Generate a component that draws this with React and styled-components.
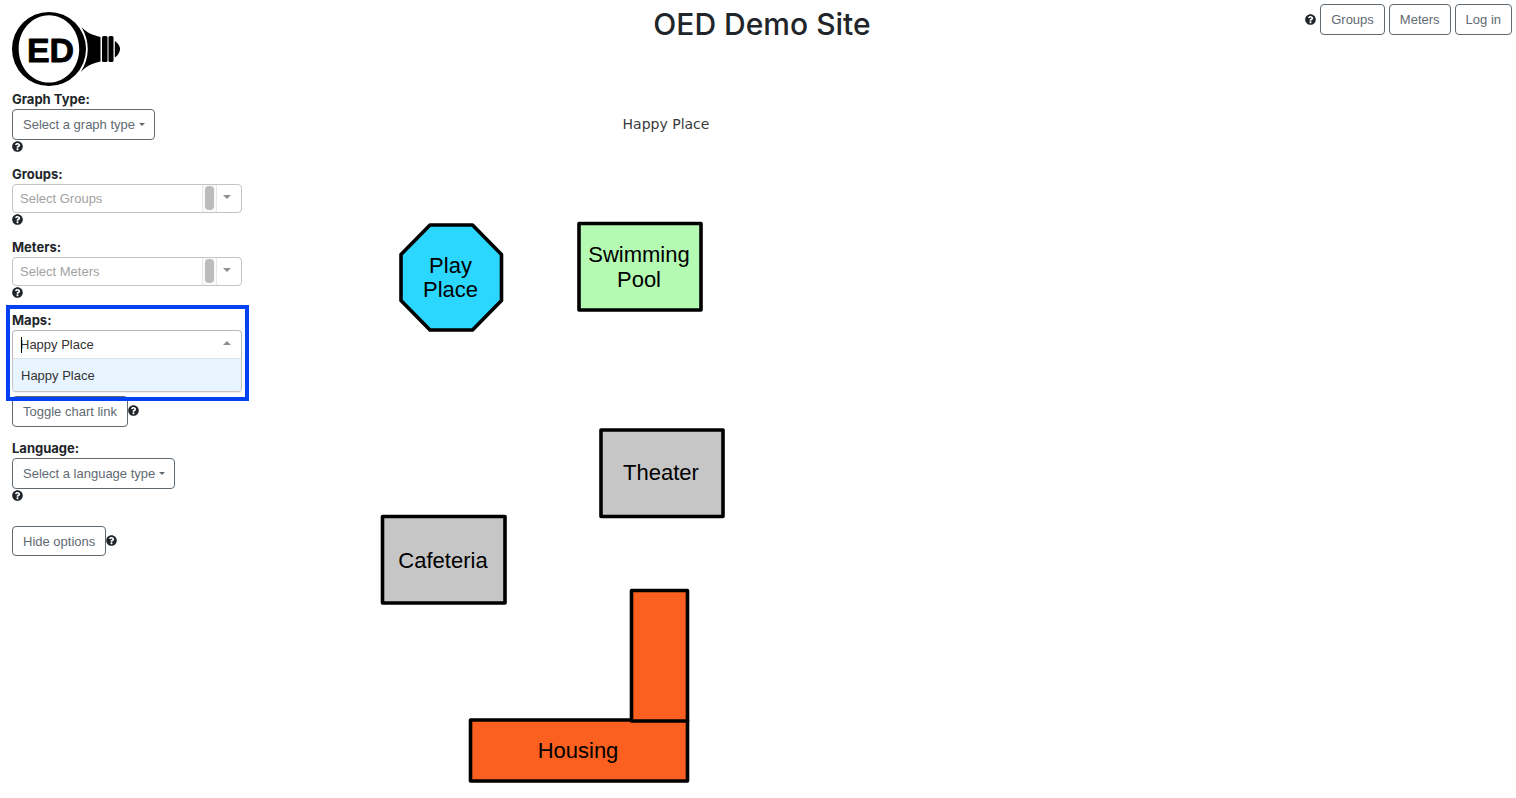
import React from "react";
import styled, { createGlobalStyle, css } from "styled-components";
import { FaQuestionCircle } from "react-icons/fa";

const GlobalStyle = createGlobalStyle`
  *, *::before, *::after { box-sizing: border-box; }
  body {
    margin: 0;
    background: #fff;
    color: #212529;
    font-family: "Liberation Sans", Arial, sans-serif;
    font-size: 13px;
    line-height: 19px;
  }
`;

const Header = styled.header`
  display: grid;
  grid-template-columns: 1fr auto 1fr;
  align-items: start;
  min-height: 90px;
  padding: 0 4px 0 12px;
`;

const HomeLink = styled.a`
  justify-self: start;
  padding-top: 12px;
  color: #000;
  svg { display: block; }
`;

const Title = styled.h1`
  margin: 0;
  padding-top: 4px;
  font-family: Inter, sans-serif;
  font-size: 30px;
  font-weight: 500;
  line-height: 40px;
`;

const Nav = styled.nav`
  display: flex;
  justify-self: end;
  align-items: center;
  gap: 4px;
  padding-top: 4px;
`;

const outline = css`
  height: ${(p) => p.$height || 31}px;
  border: 1px solid #5f6a73;
  border-radius: 4px;
  background: #fff;
  color: #5f6a73;
  font-family: inherit;
  font-size: 13px;
  line-height: 19px;
  white-space: nowrap;
`;

const OutlineButton = styled.button`
  ${outline}
  padding: 0 10px;
`;

const DropdownWrap = styled.span`
  position: relative;
  display: flex;
  width: fit-content;
`;

const Dropdown = styled.select`
  ${outline}
  appearance: none;
  padding: 0 18px 0 10px;
`;

const Caret = styled.span`
  width: 0;
  height: 0;
  border: ${(p) => p.$size || 4}px solid transparent;
  border-top-color: ${(p) => (p.$up ? "transparent" : "currentColor")};
  border-bottom-color: ${(p) => (p.$up ? "currentColor" : "transparent")};
  ${(p) => (p.$up ? "border-top-width: 0;" : "border-bottom-width: 0;")}
  pointer-events: none;
`;

const DropdownCaret = styled(Caret)`
  position: absolute;
  right: 10px;
  top: 14px;
  color: #5f6a73;
`;

const HelpButton = styled.button`
  display: flex;
  align-items: center;
  height: 13px;
  padding: 0;
  border: 0;
  background: none;
  color: #212529;
  font-size: 11px;
`;

const Page = styled.div`
  display: flex;
  align-items: flex-start;
`;

const Sidebar = styled.aside`
  display: flex;
  flex: none;
  flex-direction: column;
  gap: 12px;
  width: 252px;
  padding: 0 10px 0 12px;
`;

const Field = styled.div`
  position: relative;
`;

const Label = styled.label`
  display: block;
  font-family: Inter, sans-serif;
  font-weight: 700;
`;

const ActionRow = styled.div`
  display: flex;
  align-items: center;
  margin-top: 12px;
  ${HelpButton} { margin-bottom: 2px; }
`;

const Combo = styled.div`
  display: flex;
  height: 29px;
  border: 1px solid ${(p) => (p.$open ? "#b9b9b9" : "#c4c4c4")};
  border-bottom-color: ${(p) => (p.$open ? "#e0e0e0" : "#c4c4c4")};
  border-radius: ${(p) => (p.$open ? "4px 4px 0 0" : "4px")};
  background: #fff;
`;

const ComboInput = styled.input`
  flex: 1;
  min-width: 0;
  padding: 0 7px;
  border: 0;
  outline: 0;
  background: none;
  color: #333;
  font-family: inherit;
  font-size: 13px;
  line-height: 19px;
  &::placeholder { color: #a2a2a2; opacity: 1; }
`;

const ScrollTrack = styled.span`
  display: flex;
  width: 15px;
  padding: 1px 2px 2px;
  border: solid #e8e8e8;
  border-width: 0 1px;
  background: #fafafa;
  &::after {
    content: "";
    flex: 1;
    border-radius: 4px;
    background: #bcbcbc;
  }
`;

const ComboArrow = styled.button`
  display: flex;
  align-items: center;
  justify-content: center;
  width: 24px;
  padding: 0 4px 3px 0;
  border: 0;
  background: none;
  color: #8f8f8f;
`;

const TextCursor = styled.span`
  position: absolute;
  left: 9px;
  top: 26px;
  width: 1px;
  height: 16px;
  background: #000;
`;

const Menu = styled.ul`
  position: absolute;
  z-index: 1;
  top: 48px;
  left: 0;
  right: 0;
  margin: 0;
  padding: 0;
  border: 1px solid #c4c4c4;
  border-top: 0;
  border-radius: 0 0 4px 4px;
  overflow: hidden;
  box-shadow: 0 1px 0 rgba(0, 0, 0, 0.06);
  list-style: none;
`;

const Option = styled.li`
  padding: 7px 8px 6px;
  background: #e8f4ff;
  color: #333;
`;

const Highlight = styled.div`
  position: absolute;
  z-index: 2;
  inset: -6px -7px -29px -6px;
  border: 4px solid #0041f5;
  pointer-events: none;
`;

const Main = styled.main`
  flex: 1;
  min-width: 0;
`;

const MapFigure = styled.figure`
  max-width: 828px;
  margin: 0;
  svg { display: block; width: 100%; }
`;

const MapCaption = styled.figcaption`
  padding: 25px 0 6px;
  color: #3a3a3a;
  font-family: "DejaVu Sans", sans-serif;
  font-size: 14px;
  text-align: center;
`;

function Help({ topic }) {
  return (
    <HelpButton type="button" aria-label={`Help: ${topic}`}>
      <FaQuestionCircle />
    </HelpButton>
  );
}

function Logo() {
  return (
    <svg width="110" height="75" viewBox="12 12 110 75" role="img" aria-label="OED">
      <path
        fill="currentColor"
        fillRule="evenodd"
        d="M49 12a37 37 0 1 1 0 74a37 37 0 1 1 0-74zM49 15.3c-17 0-30.3 15-30.3 33.6S32 82.500 49 82.500S79.200 67.500 79.200 48.900S66 15.300 49 15.300z"
      />
      <path
        fill="currentColor"
        d="M81.500 27C87 33 92 34.800 100.500 37V61.500C93 63 86 66 80.800 72C90 58 90 41 81.500 27z"
      />
      <rect x="102" y="36" width="5.500" height="26" rx="1.500" fill="currentColor" />
      <rect x="108.500" y="36" width="5" height="26" rx="1.500" fill="currentColor" />
      <path fill="currentColor" d="M114.800 41C117.500 42.500 120 46 120 49S117.500 56 114.800 57.500z" />
      <text
        x="50.500"
        y="61.500"
        textAnchor="middle"
        fontFamily="Liberation Sans, sans-serif"
        fontWeight="700"
        fontSize="34"
        fill="currentColor"
        stroke="currentColor"
        strokeWidth="0.800"
        strokeLinejoin="round"
      >
        ED
      </text>
    </svg>
  );
}

function SelectButton({ id, label, placeholder }) {
  return (
    <Field>
      <Label htmlFor={id}>{label}</Label>
      <DropdownWrap>
        <Dropdown id={id}>
          <option>{placeholder}</option>
        </Dropdown>
        <DropdownCaret $size={3} />
      </DropdownWrap>
      <Help topic={label} />
    </Field>
  );
}

function MultiSelect({ id, label, placeholder }) {
  return (
    <Field>
      <Label htmlFor={id}>{label}</Label>
      <Combo>
        <ComboInput id={id} role="combobox" aria-expanded="false" placeholder={placeholder} />
        <ScrollTrack />
        <ComboArrow type="button" aria-label={`Open ${label}`}>
          <Caret />
        </ComboArrow>
      </Combo>
      <Help topic={label} />
    </Field>
  );
}

function MapSelect() {
  return (
    <Field>
      <Label htmlFor="maps">Maps:</Label>
      <Combo $open>
        <ComboInput
          id="maps"
          role="combobox"
          aria-expanded="true"
          aria-controls="map-options"
          defaultValue="Happy Place"
        />
        <ComboArrow type="button" aria-label="Close maps">
          <Caret $up />
        </ComboArrow>
      </Combo>
      <TextCursor />
      <Menu id="map-options" role="listbox">
        <Option role="option" aria-selected="true">Happy Place</Option>
      </Menu>
      <Help topic="Maps" />
      <Highlight />
    </Field>
  );
}

function CampusMap() {
  return (
    <svg viewBox="252 140 828 650" role="img" aria-label="Campus map">
      <g stroke="#000" strokeWidth="3.600" strokeLinejoin="round">
        <path d="M430 225H472.500L501.500 254.500V300.500L472.500 330H430L401 300.500V254.500z" fill="#2bd6ff" />
        <rect x="579" y="223.500" width="122" height="86.500" fill="#b5fab3" />
        <rect x="601" y="430" width="122" height="86.500" fill="#c6c6c6" />
        <rect x="382.500" y="516.500" width="122.500" height="86.500" fill="#c6c6c6" />
        <rect x="470.500" y="720" width="217" height="61" fill="#fb6020" />
        <rect x="631.500" y="590.500" width="56" height="130.500" fill="#fb6020" />
      </g>
      <g fontFamily="Liberation Sans, sans-serif" fontSize="22" textAnchor="middle" fill="#000">
        <text x="450.500" y="273">Play</text>
        <text x="450.500" y="297">Place</text>
        <text x="639" y="262">Swimming</text>
        <text x="639" y="287">Pool</text>
        <text x="661" y="480">Theater</text>
        <text x="443" y="568">Cafeteria</text>
        <text x="578" y="758">Housing</text>
      </g>
    </svg>
  );
}

export default function App() {
  return (
    <>
      <GlobalStyle />
      <Header>
        <HomeLink href="#home">
          <Logo />
        </HomeLink>
        <Title>OED Demo Site</Title>
        <Nav>
          <Help topic="Site" />
          <OutlineButton type="button">Groups</OutlineButton>
          <OutlineButton type="button">Meters</OutlineButton>
          <OutlineButton type="button">Log in</OutlineButton>
        </Nav>
      </Header>
      <Page>
        <Sidebar>
          <SelectButton id="graph-type" label="Graph Type:" placeholder="Select a graph type" />
          <MultiSelect id="groups" label="Groups:" placeholder="Select Groups" />
          <MultiSelect id="meters" label="Meters:" placeholder="Select Meters" />
          <MapSelect />
          <ActionRow>
            <OutlineButton type="button">Toggle chart link</OutlineButton>
            <Help topic="Chart link" />
          </ActionRow>
          <SelectButton id="language" label="Language:" placeholder="Select a language type" />
          <ActionRow>
            <OutlineButton type="button" $height={30}>Hide options</OutlineButton>
            <Help topic="Options" />
          </ActionRow>
        </Sidebar>
        <Main>
          <MapFigure>
            <MapCaption>Happy Place</MapCaption>
            <CampusMap />
          </MapFigure>
        </Main>
      </Page>
    </>
  );
}
